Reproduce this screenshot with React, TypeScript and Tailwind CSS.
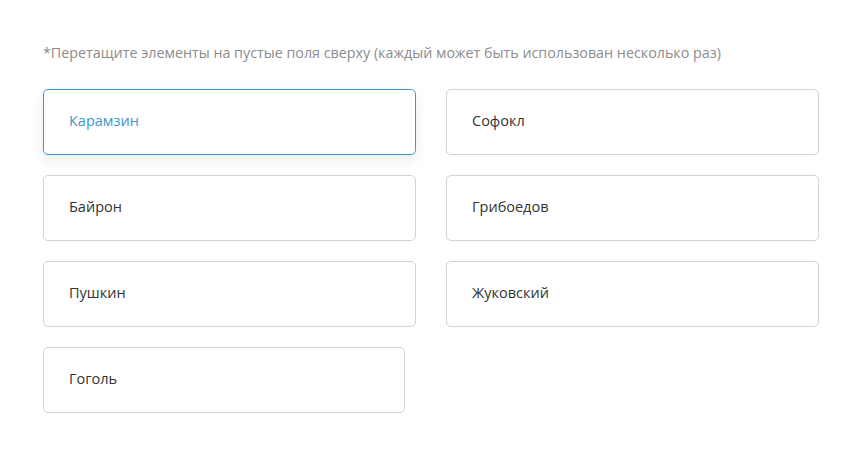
const items = [
	{ name: "Карамзин", active: true },
	{ name: "Софокл" },
	{ name: "Байрон" },
	{ name: "Грибоедов" },
	{ name: "Пушкин" },
	{ name: "Жуковский" },
	{ name: "Гоголь", narrow: true },
];

export default function App() {
	return (
		<div className="min-h-[473px] w-[851px] bg-white pl-[43px] pt-[42px] font-['Open_Sans',sans-serif]">
			<p className="text-[14.3px] leading-[22px] text-[#8c8c8c]">
				*Перетащите элементы на пустые поля сверху (каждый может быть использован несколько раз)
			</p>

			<div className="mt-[25px] grid w-[776px] grid-cols-[373px_373px] gap-x-[30px] gap-y-[20px]">
				{items.map((item) => (
					<div
						key={item.name}
						className={
							item.active
								? "flex h-[66px] items-center rounded-[5px] border border-[#3c97cf] pb-[3px] pl-[25px] text-[14.5px] text-[#3f95cc] shadow-[0_6px_14px_rgba(0,0,0,0.08)]"
								: item.narrow
									? "flex h-[66px] w-[362px] items-center rounded-[5px] border border-[#d2d2d2] pb-[3px] pl-[25px] text-[14.5px] text-[#333333]"
									: "flex h-[66px] items-center rounded-[5px] border border-[#d2d2d2] pb-[3px] pl-[25px] text-[14.5px] text-[#333333]"
						}
					>
						{item.name}
					</div>
				))}
			</div>
		</div>
	);
}
